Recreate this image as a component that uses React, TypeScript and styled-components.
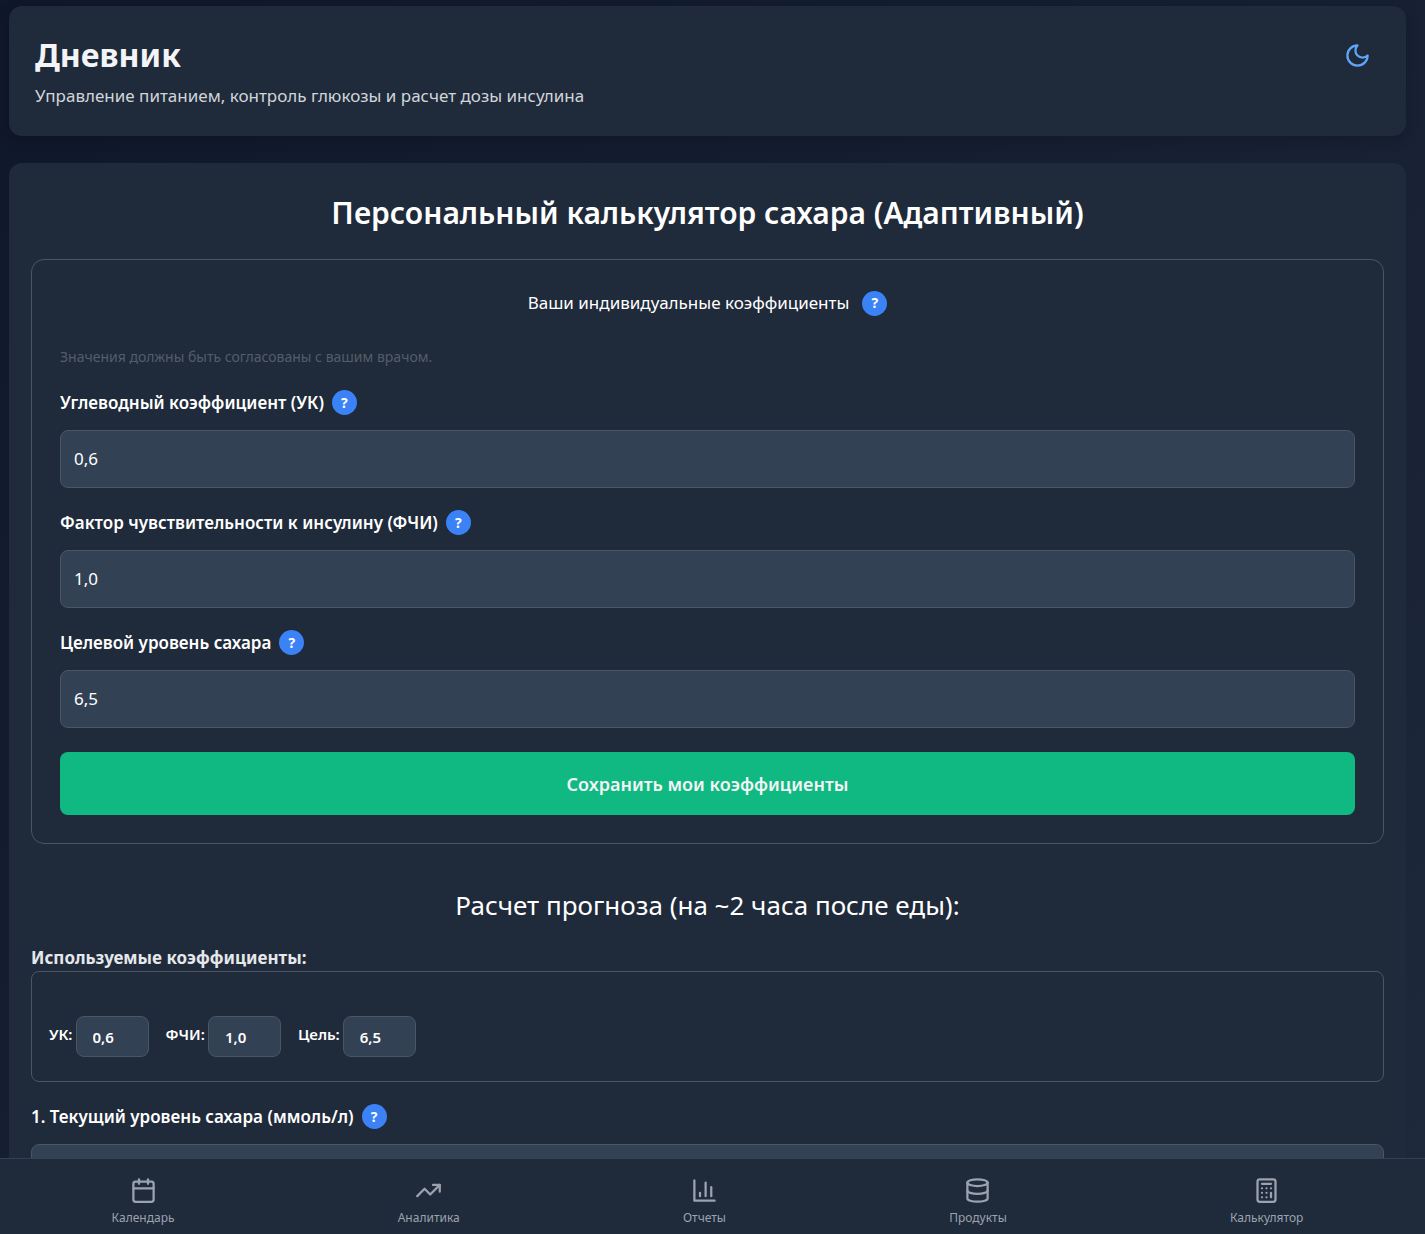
import React, { useId, useState } from "react";
import styled, { createGlobalStyle } from "styled-components";
import {
  Calculator,
  Calendar,
  Database,
  TrendingUp,
  type LucideIcon,
} from "lucide-react";

const color = {
  card: "#1f2a3a",
  field: "#334155",
  line: "#4b5563",
  divider: "#334155",
  text: "#ffffff",
  heading: "#f3f4f6",
  soft: "#d1d5db",
  strong: "#e5e7eb",
  muted: "#9ca3af",
  hint: "#555d68",
  blue: "#3b82f6",
  green: "#10b981",
};

const GlobalStyle = createGlobalStyle`
  *, *::before, *::after { box-sizing: border-box; }
  body {
    margin: 0;
    font-family: "Segoe UI", "Noto Sans", "Open Sans", sans-serif;
    font-size: 17px;
    line-height: 26px;
    color: ${color.text};
    background: #0f172a;
  }
  h1, h2, h3, p { margin: 0; }
  button, input { font: inherit; color: inherit; }
`;

const Shell = styled.div`
  display: flex;
  flex-direction: column;
  height: 100vh;
  background: linear-gradient(135deg, #0f172a 0%, #1e293b 100%);
`;

const Scroller = styled.div`
  flex: 1;
  min-height: 0;
  overflow-y: auto;
  scrollbar-width: none;
  display: flex;
  flex-direction: column;
  gap: 27px;
  padding: 6px 19px 26px 9px;
  & > * { flex-shrink: 0; }
`;

const Header = styled.header`
  display: flex;
  justify-content: space-between;
  align-items: flex-start;
  padding: 26px 26px 27px;
  border-radius: 13px;
  background: ${color.card};
  box-shadow: 0 4px 14px rgba(0, 0, 0, 0.2);
`;

const Brand = styled.h1`
  font-size: 32px;
  line-height: 46px;
  font-weight: 700;
  color: ${color.heading};
`;

const Tagline = styled.p`
  margin-top: 5px;
  color: ${color.soft};
`;

const ThemeButton = styled.button`
  display: flex;
  padding: 10px 9px;
  border: 0;
  border-radius: 8px;
  background: none;
  color: #60a5fa;
  cursor: pointer;
`;

const Card = styled.main`
  padding: 26px 22px 22px;
  border-radius: 13px;
  background: ${color.card};
`;

const Title = styled.h2`
  margin-bottom: 22px;
  font-size: 30px;
  line-height: 48px;
  font-weight: 600;
  text-align: center;
`;

const Panel = styled.section`
  padding: 28px;
  border: 1px solid ${color.line};
  border-radius: 13px;
`;

const PanelHeading = styled.div`
  display: flex;
  justify-content: center;
  align-items: center;
  gap: 13px;
  height: 30px;
  h3 { font-size: 17px; font-weight: 400; }
`;

const Hint = styled.p`
  margin-top: 28px;
  font-size: 14px;
  line-height: 22px;
  color: ${color.hint};
`;

const FieldBox = styled.div`
  margin-top: 22px;
`;

const LabelRow = styled.div`
  display: flex;
  align-items: center;
  gap: 8px;
  height: 25px;
  margin-bottom: 15px;
  font-weight: 600;
`;

const HelpButton = styled.button`
  display: grid;
  place-items: center;
  width: 25px;
  height: 25px;
  padding: 0;
  border: 0;
  border-radius: 50%;
  background: ${color.blue};
  font-size: 14px;
  line-height: 20px;
  font-weight: 700;
  cursor: pointer;
`;

const TextInput = styled.input`
  display: block;
  width: 100%;
  height: 58px;
  padding: 0 13px 2px;
  border: 1px solid ${color.line};
  border-radius: 8px;
  background: ${color.field};
`;

const SaveButton = styled.button`
  display: block;
  width: 100%;
  height: 63px;
  margin-top: 24px;
  border: 0;
  border-radius: 8px;
  background: ${color.green};
  font-size: 18px;
  font-weight: 600;
  color: ${color.heading};
  cursor: pointer;
`;

const ForecastTitle = styled.h2`
  margin: 41px 0 20px;
  font-size: 26px;
  line-height: 40px;
  font-weight: 400;
  text-align: center;
`;

const UsedTitle = styled.h3`
  font-size: 17px;
  font-weight: 700;
  color: ${color.strong};
`;

const UsedPanel = styled.div`
  display: flex;
  flex-wrap: wrap;
  gap: 17px;
  padding: 44px 17px 24px;
  border: 1px solid ${color.line};
  border-radius: 8px;
  font-size: 15px;
  font-weight: 600;
`;

const UsedItem = styled.div`
  display: flex;
  align-items: center;
  gap: 3px;
  label { padding-bottom: 6px; }
`;

const UsedInput = styled.input`
  width: 73px;
  height: 41px;
  padding: 0 16px;
  border: 1px solid ${color.line};
  border-radius: 8px;
  background: ${color.field};
`;

const TabBar = styled.nav`
  display: flex;
  justify-content: space-around;
  padding: 18px 10px 6px 0;
  border-top: 1px solid ${color.divider};
  background: ${color.card};
`;

const Tab = styled.a`
  display: flex;
  flex-direction: column;
  align-items: center;
  gap: 4px;
  font-size: 12px;
  line-height: 20px;
  color: ${color.muted};
  text-decoration: none;
`;

type IconProps = { size?: number };

function MoonIcon({ size = 27 }: IconProps) {
  return (
    <svg width={size} height={size} viewBox="0 0 24 24" fill="none" stroke="currentColor"
      strokeWidth="2" strokeLinecap="round" strokeLinejoin="round" aria-hidden="true">
      <path d="M12 3a6 6 0 0 0 9 9 9 9 0 1 1-9-9Z" />
    </svg>
  );
}

function ReportIcon({ size = 27 }: IconProps) {
  return (
    <svg width={size} height={size} viewBox="0 0 24 24" fill="none" stroke="currentColor"
      strokeWidth="2" strokeLinecap="round" strokeLinejoin="round" aria-hidden="true">
      <path d="M3 3v18h18" />
      <path d="M18 17V9" />
      <path d="M13 17V5" />
      <path d="M8 17v-3" />
    </svg>
  );
}

const tabs: { label: string; href: string; Icon: LucideIcon | typeof ReportIcon }[] = [
  { label: "Календарь", href: "#calendar", Icon: Calendar },
  { label: "Аналитика", href: "#analytics", Icon: TrendingUp },
  { label: "Отчеты", href: "#reports", Icon: ReportIcon },
  { label: "Продукты", href: "#products", Icon: Database },
  { label: "Калькулятор", href: "#calculator", Icon: Calculator },
];

function Help({ topic }: { topic: string }) {
  return <HelpButton type="button" aria-label={`Справка: ${topic}`}>?</HelpButton>;
}

type FieldProps = { label: string; value: string; onChange: (value: string) => void };

function Field({ label, value, onChange }: FieldProps) {
  const id = useId();
  return (
    <FieldBox>
      <LabelRow>
        <label htmlFor={id}>{label}</label>
        <Help topic={label} />
      </LabelRow>
      <TextInput id={id} inputMode="decimal" value={value}
        onChange={(e) => onChange(e.target.value)} />
    </FieldBox>
  );
}

function UsedValue({ label, value }: { label: string; value: string }) {
  const id = useId();
  return (
    <UsedItem>
      <label htmlFor={id}>{label}</label>
      <UsedInput id={id} value={value} readOnly />
    </UsedItem>
  );
}

export default function App() {
  const [carb, setCarb] = useState("0,6");
  const [factor, setFactor] = useState("1,0");
  const [target, setTarget] = useState("6,5");
  const [current, setCurrent] = useState("");

  return (
    <Shell>
      <GlobalStyle />
      <Scroller>
        <Header>
          <div>
            <Brand>Дневник</Brand>
            <Tagline>Управление питанием, контроль глюкозы и расчет дозы инсулина</Tagline>
          </div>
          <ThemeButton type="button" aria-label="Сменить тему">
            <MoonIcon />
          </ThemeButton>
        </Header>

        <Card>
          <Title>Персональный калькулятор сахара (Адаптивный)</Title>
          <Panel>
            <PanelHeading>
              <h3>Ваши индивидуальные коэффициенты</h3>
              <Help topic="коэффициенты" />
            </PanelHeading>
            <Hint>Значения должны быть согласованы с вашим врачом.</Hint>
            <Field label="Углеводный коэффициент (УК)" value={carb} onChange={setCarb} />
            <Field label="Фактор чувствительности к инсулину (ФЧИ)" value={factor} onChange={setFactor} />
            <Field label="Целевой уровень сахара" value={target} onChange={setTarget} />
            <SaveButton type="button">Сохранить мои коэффициенты</SaveButton>
          </Panel>

          <ForecastTitle>Расчет прогноза (на ~2 часа после еды):</ForecastTitle>
          <UsedTitle>Используемые коэффициенты:</UsedTitle>
          <UsedPanel>
            <UsedValue label="УК:" value={carb} />
            <UsedValue label="ФЧИ:" value={factor} />
            <UsedValue label="Цель:" value={target} />
          </UsedPanel>
          <Field label="1. Текущий уровень сахара (ммоль/л)" value={current} onChange={setCurrent} />
        </Card>
      </Scroller>

      <TabBar>
        {tabs.map(({ label, href, Icon }) => (
          <Tab key={href} href={href}>
            <Icon size={27} />
            {label}
          </Tab>
        ))}
      </TabBar>
    </Shell>
  );
}
